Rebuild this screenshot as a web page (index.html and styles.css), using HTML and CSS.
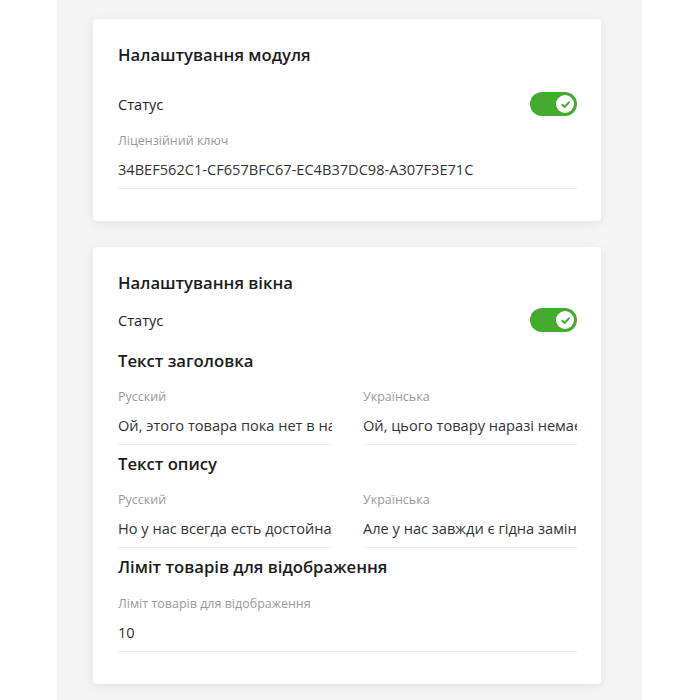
FILE: index.html
```html
<!DOCTYPE html>
<html lang="uk">
<head>
  <meta charset="UTF-8" />
  <meta name="viewport" content="width=device-width, initial-scale=1.0"/>
  <title>Налаштування модуля</title>
  <link rel="stylesheet" href="styles.css">
</head>
<body>
  <div class="page">

    <!-- Module settings -->
    <div class="card card-module">
      <h2 class="card-title">Налаштування модуля</h2>

      <div class="status-row">
        <span>Статус</span>
        <span class="toggle"><span class="knob"><svg viewBox="0 0 12 12" width="11" height="11"><path d="M2.4 6.2 L5 8.7 L9.7 3.6" fill="none" stroke="#43ab2e" stroke-width="2.1" stroke-linecap="round" stroke-linejoin="round"/></svg></span></span>
      </div>

      <div class="field">
        <div class="field-label">Ліцензійний ключ</div>
        <div class="field-value">34BEF562C1-CF657BFC67-EC4B37DC98-A307F3E71C</div>
      </div>
    </div>

    <!-- Window settings -->
    <div class="card card-window">
      <h2 class="card-title">Налаштування вікна</h2>

      <div class="status-row">
        <span>Статус</span>
        <span class="toggle"><span class="knob"><svg viewBox="0 0 12 12" width="11" height="11"><path d="M2.4 6.2 L5 8.7 L9.7 3.6" fill="none" stroke="#43ab2e" stroke-width="2.1" stroke-linecap="round" stroke-linejoin="round"/></svg></span></span>
      </div>

      <h3 class="section-title">Текст заголовка</h3>
      <div class="field-pair">
        <div class="field">
          <div class="field-label">Русский</div>
          <div class="field-value">Ой, этого товара пока нет в наличии</div>
        </div>
        <div class="field">
          <div class="field-label">Українська</div>
          <div class="field-value">Ой, цього товару наразі немає в наявності</div>
        </div>
      </div>

      <h3 class="section-title">Текст опису</h3>
      <div class="field-pair">
        <div class="field">
          <div class="field-label">Русский</div>
          <div class="field-value">Но у нас всегда есть достойная замена</div>
        </div>
        <div class="field">
          <div class="field-label">Українська</div>
          <div class="field-value">Але у нас завжди є гідна заміна</div>
        </div>
      </div>

      <h3 class="section-title">Ліміт товарів для відображення</h3>
      <div class="field field-limit">
        <div class="field-label">Ліміт товарів для відображення</div>
        <div class="field-value">10</div>
      </div>
    </div>

  </div>
</body>
</html>
```

FILE: styles.css
```css
html, body {
  margin: 0;
  padding: 0;
  background: #fff;
  font-family: 'Open Sans', 'Noto Sans', sans-serif;
  color: #222;
}

.page {
  width: 508px;
  margin-left: 57px;
  min-height: 700px;
  padding: 19px 41px 0 36px;
  background: #f4f4f4;
}

.card {
  background: #fff;
  border-radius: 4px;
  box-shadow: 0 2px 10px rgba(0, 0, 0, 0.08);
  padding: 24px 24px 24px 25px;
}

.card-module {
  padding-bottom: 32px;
}

.card-window {
  margin-top: 26px;
  padding-bottom: 32px;
}

.card-title {
  margin: 0;
  font-size: 16.7px;
  font-weight: 600;
  line-height: 24px;
  color: #1b1b1b;
}

.card-module .card-title {
  margin-bottom: 25px;
}

.card-window .card-title {
  margin-bottom: 13px;
}

.status-row {
  display: flex;
  align-items: center;
  justify-content: space-between;
  font-size: 14.6px;
  height: 24px;
}

.toggle {
  width: 47px;
  height: 24px;
  border-radius: 12px;
  background: #43ab2e;
  display: flex;
  align-items: center;
  justify-content: flex-end;
  padding-right: 3px;
  box-sizing: border-box;
}

.knob {
  width: 18px;
  height: 18px;
  border-radius: 50%;
  background: #fff;
  display: flex;
  align-items: center;
  justify-content: center;
}

.section-title {
  margin: 16px 0 0;
  font-size: 16.7px;
  font-weight: 600;
  line-height: 24px;
  color: #1b1b1b;
}

.status-row + .section-title {
  margin-top: 17px;
}

.section-title + .field-pair,
.section-title + .field {
  margin-top: 16px;
}

.section-title + .field-limit {
  margin-top: 17px;
}

.status-row + .field {
  margin-top: 17px;
}

.field-pair + .section-title {
  margin-top: 7px;
}

.field-pair {
  display: grid;
  grid-template-columns: minmax(0, 1fr) minmax(0, 1fr);
  column-gap: 31px;
}

.field-label {
  font-size: 12.5px;
  line-height: 16px;
  color: #999;
}

.field-value {
  margin-top: 10px;
  padding-bottom: 9px;
  font-size: 14.6px;
  line-height: 20px;
  color: #333;
  white-space: nowrap;
  overflow: hidden;
  border-bottom: 1px solid #ececec;
}
```
